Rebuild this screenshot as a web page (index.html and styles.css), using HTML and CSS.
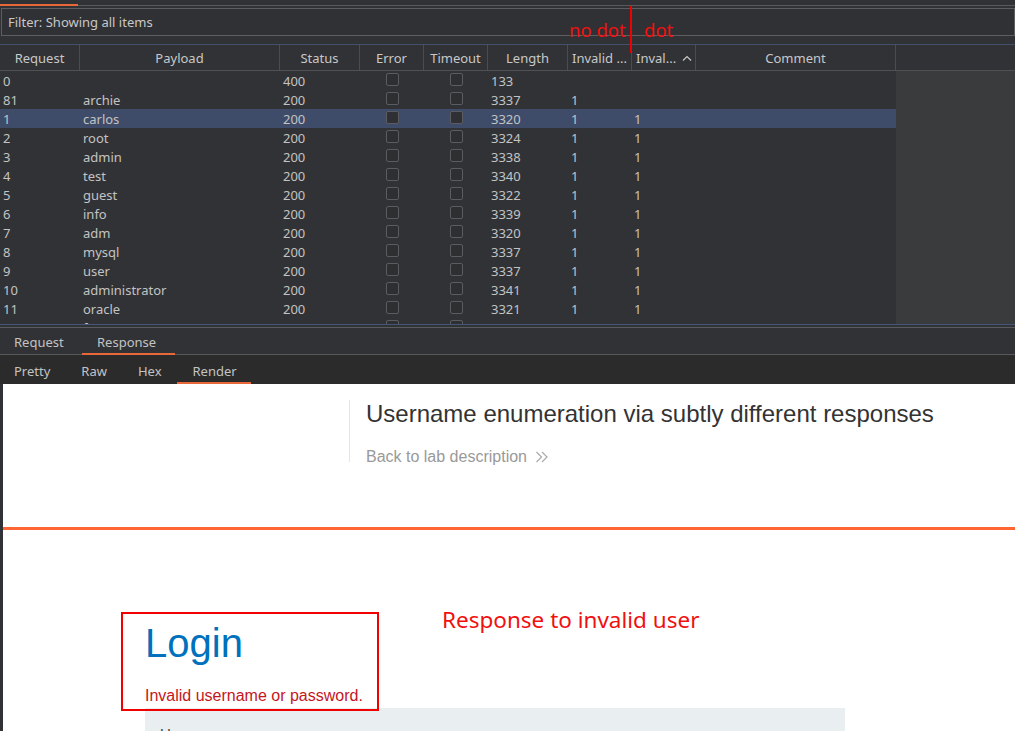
FILE: index.html
```html
<!DOCTYPE html>
<html>
<head>
<meta charset="utf-8">
<link rel="stylesheet" href="styles.css">
</head>
<body>
<div class="app">
  <div class="toptabs"><div class="toptab-active"></div></div>
  <div class="filter">Filter: Showing all items</div>
  <div class="table">
    <div class="thead">
      <div class="th c1">Request</div>
      <div class="th c2">Payload</div>
      <div class="th c3">Status</div>
      <div class="th c4">Error</div>
      <div class="th c5">Timeout</div>
      <div class="th c6">Length</div>
      <div class="th c7">Invalid ...</div>
      <div class="th c8">Inval... <svg class="sort" width="10" height="6" viewBox="0 0 10 6"><path d="M1 5.5 L5 1.5 L9 5.5" fill="none" stroke="#c8c8c8" stroke-width="1.2"/></svg></div>
      <div class="th c9">Comment</div>
      <div class="th c10"></div>
    </div>
    <div class="tbody">
      <div class="rows">
        <div class="row"><span class="c1">0</span><span class="c2"></span><span class="c3">400</span><span class="c4"><i class="cb"></i></span><span class="c5"><i class="cb"></i></span><span class="c6">133</span><span class="c7"></span><span class="c8"></span></div>
        <div class="row"><span class="c1">81</span><span class="c2">archie</span><span class="c3">200</span><span class="c4"><i class="cb"></i></span><span class="c5"><i class="cb"></i></span><span class="c6">3337</span><span class="c7">1</span><span class="c8"></span></div>
        <div class="row sel"><span class="c1">1</span><span class="c2">carlos</span><span class="c3">200</span><span class="c4"><i class="cb"></i></span><span class="c5"><i class="cb"></i></span><span class="c6">3320</span><span class="c7">1</span><span class="c8">1</span></div>
        <div class="row"><span class="c1">2</span><span class="c2">root</span><span class="c3">200</span><span class="c4"><i class="cb"></i></span><span class="c5"><i class="cb"></i></span><span class="c6">3324</span><span class="c7">1</span><span class="c8">1</span></div>
        <div class="row"><span class="c1">3</span><span class="c2">admin</span><span class="c3">200</span><span class="c4"><i class="cb"></i></span><span class="c5"><i class="cb"></i></span><span class="c6">3338</span><span class="c7">1</span><span class="c8">1</span></div>
        <div class="row"><span class="c1">4</span><span class="c2">test</span><span class="c3">200</span><span class="c4"><i class="cb"></i></span><span class="c5"><i class="cb"></i></span><span class="c6">3340</span><span class="c7">1</span><span class="c8">1</span></div>
        <div class="row"><span class="c1">5</span><span class="c2">guest</span><span class="c3">200</span><span class="c4"><i class="cb"></i></span><span class="c5"><i class="cb"></i></span><span class="c6">3322</span><span class="c7">1</span><span class="c8">1</span></div>
        <div class="row"><span class="c1">6</span><span class="c2">info</span><span class="c3">200</span><span class="c4"><i class="cb"></i></span><span class="c5"><i class="cb"></i></span><span class="c6">3339</span><span class="c7">1</span><span class="c8">1</span></div>
        <div class="row"><span class="c1">7</span><span class="c2">adm</span><span class="c3">200</span><span class="c4"><i class="cb"></i></span><span class="c5"><i class="cb"></i></span><span class="c6">3320</span><span class="c7">1</span><span class="c8">1</span></div>
        <div class="row"><span class="c1">8</span><span class="c2">mysql</span><span class="c3">200</span><span class="c4"><i class="cb"></i></span><span class="c5"><i class="cb"></i></span><span class="c6">3337</span><span class="c7">1</span><span class="c8">1</span></div>
        <div class="row"><span class="c1">9</span><span class="c2">user</span><span class="c3">200</span><span class="c4"><i class="cb"></i></span><span class="c5"><i class="cb"></i></span><span class="c6">3337</span><span class="c7">1</span><span class="c8">1</span></div>
        <div class="row"><span class="c1">10</span><span class="c2">administrator</span><span class="c3">200</span><span class="c4"><i class="cb"></i></span><span class="c5"><i class="cb"></i></span><span class="c6">3341</span><span class="c7">1</span><span class="c8">1</span></div>
        <div class="row"><span class="c1">11</span><span class="c2">oracle</span><span class="c3">200</span><span class="c4"><i class="cb"></i></span><span class="c5"><i class="cb"></i></span><span class="c6">3321</span><span class="c7">1</span><span class="c8">1</span></div>
        <div class="row"><span class="c1">12</span><span class="c2">ftp</span><span class="c3">200</span><span class="c4"><i class="cb"></i></span><span class="c5"><i class="cb"></i></span><span class="c6">3322</span><span class="c7">1</span><span class="c8">1</span></div>
      </div>
      <div class="blank"></div>
    </div>
  </div>
  <div class="tabs1">
    <div class="tab">Request</div>
    <div class="tab active">Response</div>
  </div>
  <div class="tabs2">
    <div class="tab2 t-pretty">Pretty</div>
    <div class="tab2 t-raw">Raw</div>
    <div class="tab2 t-hex">Hex</div>
    <div class="tab2 active">Render</div>
  </div>
  <div class="render">
    <div class="lab-header">
      <div class="lab-block">
        <div class="lab-title">Username enumeration via subtly different responses</div>
        <div class="lab-back">Back to lab description <svg class="chev" width="14" height="14" viewBox="0 0 14 14"><path d="M1.5 2 L6.5 7 L1.5 12 M7 2 L12 7 L7 12" fill="none" stroke="#aaa" stroke-width="1.2"/></svg></div>
      </div>
    </div>
    <div class="login-section">
      <h1 class="login-title">Login</h1>
      <p class="login-error">Invalid username or password.</p>
      <div class="login-form"><span class="form-label">Username</span></div>
    </div>
    <div class="anno-box"></div>
    <div class="anno-text">Response to invalid user</div>
  </div>
  <div class="anno-nodot">no dot</div>
  <div class="anno-dot">dot</div>
  <div class="anno-line"></div>
</div>
</body>
</html>
```
FILE: styles.css
```css
* { box-sizing: border-box; }
html, body { margin: 0; padding: 0; }
body {
  width: 1015px;
  height: 731px;
  overflow: hidden;
  background: #313235;
  font-family: "Noto Sans", "Open Sans", sans-serif;
  font-size: 13px;
  color: #c8c8c8;
}
.app { position: relative; height: 731px; display: flex; flex-direction: column; }

.toptabs {
  height: 6px;
  flex: none;
  border-bottom: 1px solid #58595b;
  position: relative;
}
.toptab-active {
  position: absolute;
  left: 0; bottom: -1px;
  width: 78px; height: 2px;
  background: #e8683a;
}

.filter {
  flex: none;
  margin: 2px 0 0 1px;
  height: 28px;
  border: 1px solid #5d5e60;
  padding-left: 6px;
  line-height: 26px;
  color: #c8c8c8;
  background: #303134;
}

.table { flex: none; margin-top: 8px; border-top: 1px solid #45506a; }
.thead {
  display: flex;
  height: 26px;
  border-bottom: 1px solid #505153;
}
.th {
  text-align: center;
  line-height: 27px;
  border-right: 1px solid #4b4c4f;
  white-space: nowrap;
  overflow: hidden;
}
.c1 { width: 80px; flex: none; }
.c2 { width: 200px; flex: none; }
.c3 { width: 80px; flex: none; }
.c4 { width: 64px; flex: none; }
.c5 { width: 64px; flex: none; }
.c6 { width: 80px; flex: none; }
.c7 { width: 64px; flex: none; }
.c8 { width: 64px; flex: none; }
.c9 { width: 200px; flex: none; }
.c10 { flex: 1; border-right: none; }
.th.c7 { text-align: left; padding-left: 4px; }
.th.c8 { text-align: left; padding-left: 4px; }
.sort { margin-left: 2px; vertical-align: 2px; }

.tbody {
  display: flex;
  height: 253px;
  overflow: hidden;
}
.rows { width: 896px; flex: none; }
.blank { flex: 1; background: #3a3b3d; }
.row {
  display: flex;
  height: 19px;
  padding-top: 1px;
  line-height: 19px;
  color: #c3c3c3;
  white-space: nowrap;
}
.row.sel { background: #3f4c69; }
.row .c1 { padding-left: 3px; }
.row .c2 { padding-left: 3px; }
.row .c3 { padding-left: 3px; }
.row .c4, .row .c5 { display: flex; justify-content: center; align-items: flex-start; padding-top: 1px; }
.row .c6 { padding-left: 3px; }
.row .c7 { padding-left: 3px; }
.row .c8 { padding-left: 2px; }
.cb {
  display: block;
  width: 13px; height: 13px;
  border: 1px solid #5b5c5f;
  border-radius: 2px;
  background: #2e2f31;
}
.sel .cb { background: #2f3035; }

.tabs1 {
  flex: none;
  border-top: 1px solid #46557a;
  border-bottom: 1px solid #58595b;
  padding-top: 3px;
  display: flex;
  height: 31px;
  position: relative;
}
.tabs1::before {
  content: "";
  position: absolute;
  left: 0; right: 0; top: 2px;
  height: 1px;
  background: #5b5c5e;
}
.tab {
  position: relative;
  width: 82px;
  padding: 3px 0 0 14px;
  line-height: 22px;
  height: 26px;
  color: #c3c3c3;
}
.tab.active { width: 93px; padding-left: 15px; }
.tab.active::after {
  content: "";
  position: absolute;
  left: 0; right: 0; bottom: -1px;
  height: 2px;
  background: #e8683a;
}

.tabs2 {
  flex: none;
  display: flex;
  height: 29px;
  background: #2b2b2c;
}
.tab2 {
  position: relative;
  padding: 2px 14px 0 14px;
  line-height: 28px;
  height: 29px;
  color: #c3c3c3;
}
.t-raw { margin-left: 3px; }
.t-hex { margin-left: 3px; }
.tab2.active { margin-left: 1px; width: 74px; padding-left: 16px; padding-right: 0; }
.tab2.active::after {
  content: "";
  position: absolute;
  left: 0; right: 0; bottom: 0;
  height: 2px;
  background: #e8683a;
}

.render {
  position: relative;
  flex: 1;
  background: #ffffff;
  margin-left: 3px;
  font-family: "Liberation Sans", Arial, sans-serif;
  overflow: hidden;
}
.lab-header {
  height: 146px;
  border-bottom: 3px solid #ff6633;
  padding-top: 23px;
}
.lab-block {
  margin-left: 346px;
  border-left: 1px solid #e6e6e6;
  height: 62px;
  padding-left: 16px;
}
.lab-title {
  margin-top: -7px;
  font-size: 24px;
  line-height: 27px;
  color: #333333;
  white-space: nowrap;
}
.lab-back {
  margin-top: 21px;
  font-size: 16px;
  line-height: 18px;
  color: #999999;
  display: flex;
  align-items: center;
}
.chev { margin-left: 8px; }

.login-section {
  padding: 90px 0 0 142px;
}
.login-title {
  margin: 0;
  font-size: 40px;
  line-height: 47px;
  font-weight: normal;
  color: #0071bc;
}
.login-error {
  margin: 20px 0 0 0;
  font-size: 16px;
  line-height: 18px;
  color: #c4161c;
}
.login-form {
  margin-top: 3px;
  width: 700px;
  height: 60px;
  background: #e9eef1;
  padding: 17px 15px;
  font-size: 15px;
  color: #444;
}
.form-label { display: block; }

.anno-box {
  position: absolute;
  left: 118px; top: 228px;
  width: 258px; height: 99px;
  border: 2px solid #f00000;
}
.anno-text {
  position: absolute;
  left: 439px; top: 222px;
  font-family: "Noto Sans", sans-serif;
  font-size: 22.5px;
  line-height: 28px;
  color: #f01010;
  white-space: nowrap;
}
.anno-nodot, .anno-dot {
  position: absolute;
  top: 18px;
  font-family: "Noto Sans", sans-serif;
  font-size: 18.5px;
  line-height: 24px;
  color: #f01010;
}
.anno-nodot { left: 569px; }
.anno-dot { left: 644px; }
.anno-line {
  position: absolute;
  left: 630px; top: 6px;
  width: 2px; height: 47px;
  background: #f00000;
}
```
